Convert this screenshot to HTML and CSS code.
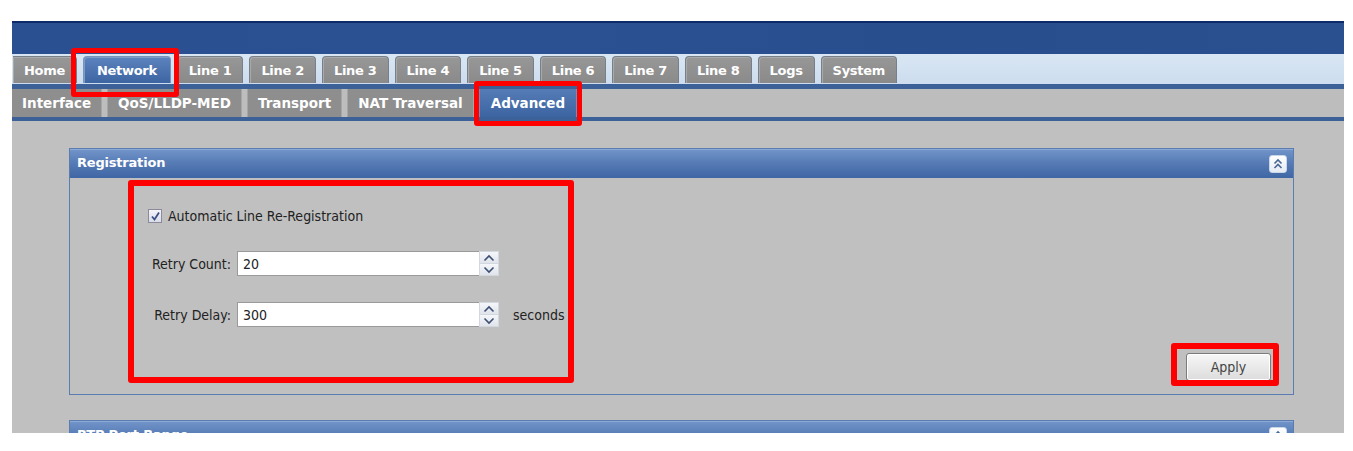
FILE: index.html
```html
<!DOCTYPE html>
<html lang="en">
<head>
    <meta charset="UTF-8">
    <meta name="viewport" content="width=device-width, initial-scale=1.0">
    <title>Network - Advanced</title>
    <link rel="stylesheet" href="styles.css">
</head>
<body>

    <div class="screen">

        <div class="header"></div>

        <div class="tabbar">
            <div class="tab tab-home">Home</div>
            <div class="tab selected">Network</div>
            <div class="tab">Line 1</div>
            <div class="tab">Line 2</div>
            <div class="tab">Line 3</div>
            <div class="tab">Line 4</div>
            <div class="tab">Line 5</div>
            <div class="tab">Line 6</div>
            <div class="tab">Line 7</div>
            <div class="tab">Line 8</div>
            <div class="tab">Logs</div>
            <div class="tab">System</div>
        </div>

        <div class="subbar">
            <div class="subtab">Interface</div>
            <div class="subtab">QoS/LLDP-MED</div>
            <div class="subtab">Transport</div>
            <div class="subtab">NAT Traversal</div>
            <div class="subtab selected">Advanced</div>
        </div>

        <div class="content">

            <div class="panel">
                <div class="panel-head">
                    <span class="panel-title">Registration</span>
                    <span class="collapse">
                        <svg width="12" height="12" viewBox="0 0 12 12">
                            <path d="M2.5 5.5 L6 2 L9.5 5.5 M2.5 10 L6 6.5 L9.5 10" fill="none" stroke="#4a6896" stroke-width="1.6"/>
                        </svg>
                    </span>
                </div>
                <div class="panel-body">
                    <div class="form">
                        <div class="row row-check">
                            <span class="checkbox">
                                <svg width="11" height="11" viewBox="0 0 11 11">
                                    <path d="M2 5.5 L4.5 8.5 L9 1.5" fill="none" stroke="#3a4f86" stroke-width="1.8"/>
                                </svg>
                            </span>
                            <span>Automatic Line Re-Registration</span>
                        </div>
                        <div class="row">
                            <label class="field-label">Retry Count:</label>
                            <div class="spin-field">
                                <div class="text-input">20</div>
                                <div class="spinner">
                                    <span class="spin-half">
                                        <svg width="12" height="8" viewBox="0 0 12 8">
                                            <path d="M1.5 6.5 L6 2 L10.5 6.5" fill="none" stroke="#3c4f70" stroke-width="1.6"/>
                                        </svg>
                                    </span>
                                    <span class="spin-half">
                                        <svg width="12" height="8" viewBox="0 0 12 8">
                                            <path d="M1.5 1.5 L6 6 L10.5 1.5" fill="none" stroke="#3c4f70" stroke-width="1.6"/>
                                        </svg>
                                    </span>
                                </div>
                            </div>
                        </div>
                        <div class="row">
                            <label class="field-label">Retry Delay:</label>
                            <div class="spin-field">
                                <div class="text-input">300</div>
                                <div class="spinner">
                                    <span class="spin-half">
                                        <svg width="12" height="8" viewBox="0 0 12 8">
                                            <path d="M1.5 6.5 L6 2 L10.5 6.5" fill="none" stroke="#3c4f70" stroke-width="1.6"/>
                                        </svg>
                                    </span>
                                    <span class="spin-half">
                                        <svg width="12" height="8" viewBox="0 0 12 8">
                                            <path d="M1.5 1.5 L6 6 L10.5 1.5" fill="none" stroke="#3c4f70" stroke-width="1.6"/>
                                        </svg>
                                    </span>
                                </div>
                            </div>
                            <span class="unit">seconds</span>
                        </div>
                    </div>
                    <div class="actions">
                        <button class="apply">Apply</button>
                    </div>
                </div>
            </div>

            <div class="panel panel-next">
                <div class="panel-head">
                    <span class="panel-title">RTP Port Range</span>
                    <span class="collapse">
                        <svg width="12" height="12" viewBox="0 0 12 12">
                            <path d="M2.5 5.5 L6 2 L9.5 5.5 M2.5 10 L6 6.5 L9.5 10" fill="none" stroke="#4a6896" stroke-width="1.6"/>
                        </svg>
                    </span>
                </div>
            </div>

        </div>

        <!-- annotation boxes drawn over the screenshot -->
        <div class="mark mark-network"></div>
        <div class="mark mark-advanced"></div>
        <div class="mark mark-form"></div>
        <div class="mark mark-apply"></div>

    </div>

</body>
</html>
```

FILE: styles.css
```css
body {
    margin: 0;
    background-color: #fff;
    font-family: "DejaVu Sans Condensed", "DejaVu Sans", sans-serif;
}

.screen {
    position: relative;
    margin: 21px 0 0 12px;
    width: 1332px;
    height: 412px;
    overflow: hidden;
    background-color: #c0c0c0;
}

.header {
    height: 31px;
    border-top: 2px solid #0d2b68;
    background: linear-gradient(90deg, #2a5091, #2b5192 40%, #284e8e 70%, #2a5090);
}

.tabbar {
    display: flex;
    gap: 6px;
    height: 28px;
    padding: 2px 0 0 1px;
    background: linear-gradient(#d9e7f4, #cddcee);
    border-bottom: 5px solid #3b6198;
}

.tab {
    height: 26px;
    padding: 0 11px;
    line-height: 27px;
    font-family: "DejaVu Sans", sans-serif;
    font-size: 13px;
    font-weight: bold;
    color: #fff;
    letter-spacing: -0.3px;
    background: linear-gradient(#979797, #8a8a8a);
    border: 1px solid #777f8a;
    border-bottom: none;
    border-radius: 4px 4px 0 0;
    box-shadow: inset 1px 1px 0 #a9a9a9;
}

.tab-home {
    border-left: none;
    border-radius: 0 4px 0 0;
}

.tab.selected {
    padding: 0 13px;
    background: linear-gradient(#5c83bd, #3d65a2);
    border-color: #7894bb;
    box-shadow: inset 1px 1px 0 #7c9cc9;
}

.subbar {
    display: flex;
    gap: 5px;
    height: 28px;
    background-color: #bdbdbd;
    border-bottom: 4px solid #3b6198;
}

.subtab {
    padding: 0 10px;
    line-height: 28px;
    font-family: "DejaVu Sans", sans-serif;
    font-size: 13.5px;
    font-weight: bold;
    color: #fff;
    background-color: #8e8e8e;
    border-left: 1px solid #a6a6a6;
    border-right: 1px solid #a6a6a6;
}

.subtab:first-child {
    border-left: none;
}

.subtab.selected {
    padding: 0 11px;
    background: linear-gradient(#557cb6, #3c64a1);
    border-color: #6f8fbf;
}

.content {
    padding: 27px 50px 0 57px;
}

.panel {
    border: 1px solid #5a7cb0;
}

.panel-next {
    margin-top: 25px;
}

.panel-head {
    display: flex;
    align-items: center;
    justify-content: space-between;
    height: 28px;
    padding: 0 6px 0 7px;
    background: linear-gradient(#7093c8, #5479b3 50%, #3f67a5);
    border-top: 1px solid #8eabd6;
}

.panel-title {
    font-family: "DejaVu Sans", sans-serif;
    font-size: 13px;
    font-weight: bold;
    letter-spacing: -0.2px;
    color: #fff;
    margin-top: -3px;
}

.collapse {
    display: flex;
    align-items: center;
    justify-content: center;
    width: 16px;
    height: 16px;
    background: linear-gradient(#fff, #e4ebf4);
    border: 1px solid #c9d6e8;
    border-radius: 3px;
}

.panel-body {
    display: flex;
    flex-direction: column;
    justify-content: space-between;
    height: 216px;
    box-sizing: border-box;
    padding: 30px 22px 15px 77px;
    font-size: 14px;
    color: #222;
}

.row {
    display: flex;
    align-items: center;
    margin-bottom: 26px;
}

.row-check {
    margin-bottom: 27px;
}

.checkbox {
    display: flex;
    align-items: center;
    justify-content: center;
    width: 12px;
    height: 12px;
    margin: 0 6px 0 1px;
    background: linear-gradient(#f4f4f8, #d9dce8);
    border: 1px solid #8a8a9a;
}

.field-label {
    width: 84px;
    margin-right: 6px;
    text-align: right;
    white-space: nowrap;
}

.spin-field {
    display: flex;
}

.text-input {
    width: 236px;
    height: 23px;
    padding-left: 5px;
    line-height: 25px;
    background-color: #fff;
    border: 1px solid #9a9a9a;
    border-right: none;
}

.spinner {
    display: flex;
    flex-direction: column;
    width: 20px;
    height: 25px;
}

.spin-half {
    display: flex;
    align-items: center;
    justify-content: center;
    flex: 1;
    background: linear-gradient(#f4f6fa, #e0e4eb);
    border: 1px solid #d3d7de;
}

.spin-half + .spin-half {
    border-top: none;
}

.unit {
    margin-left: 14px;
}

.actions {
    display: flex;
    justify-content: flex-end;
}

.apply {
    width: 85px;
    height: 28px;
    font-family: "DejaVu Sans Condensed", "DejaVu Sans", sans-serif;
    font-size: 14px;
    color: #444;
    background: linear-gradient(#f7f7f7, #dcdcdc);
    border: 1px solid #7b7b7b;
    border-radius: 3px;
    box-shadow: inset 0 0 0 1px #fff;
}

.mark {
    position: absolute;
    box-sizing: border-box;
    border: 5px solid #ff0000;
    border-radius: 3px;
}

.mark-network {
    left: 59px;
    top: 27px;
    width: 108px;
    height: 49px;
}

.mark-advanced {
    left: 462px;
    top: 60px;
    width: 108px;
    height: 45px;
}

.mark-form {
    left: 116px;
    top: 159px;
    width: 446px;
    height: 203px;
    border-width: 6px;
}

.mark-apply {
    left: 1159px;
    top: 322px;
    width: 108px;
    height: 43px;
    border-width: 6px;
}
```
